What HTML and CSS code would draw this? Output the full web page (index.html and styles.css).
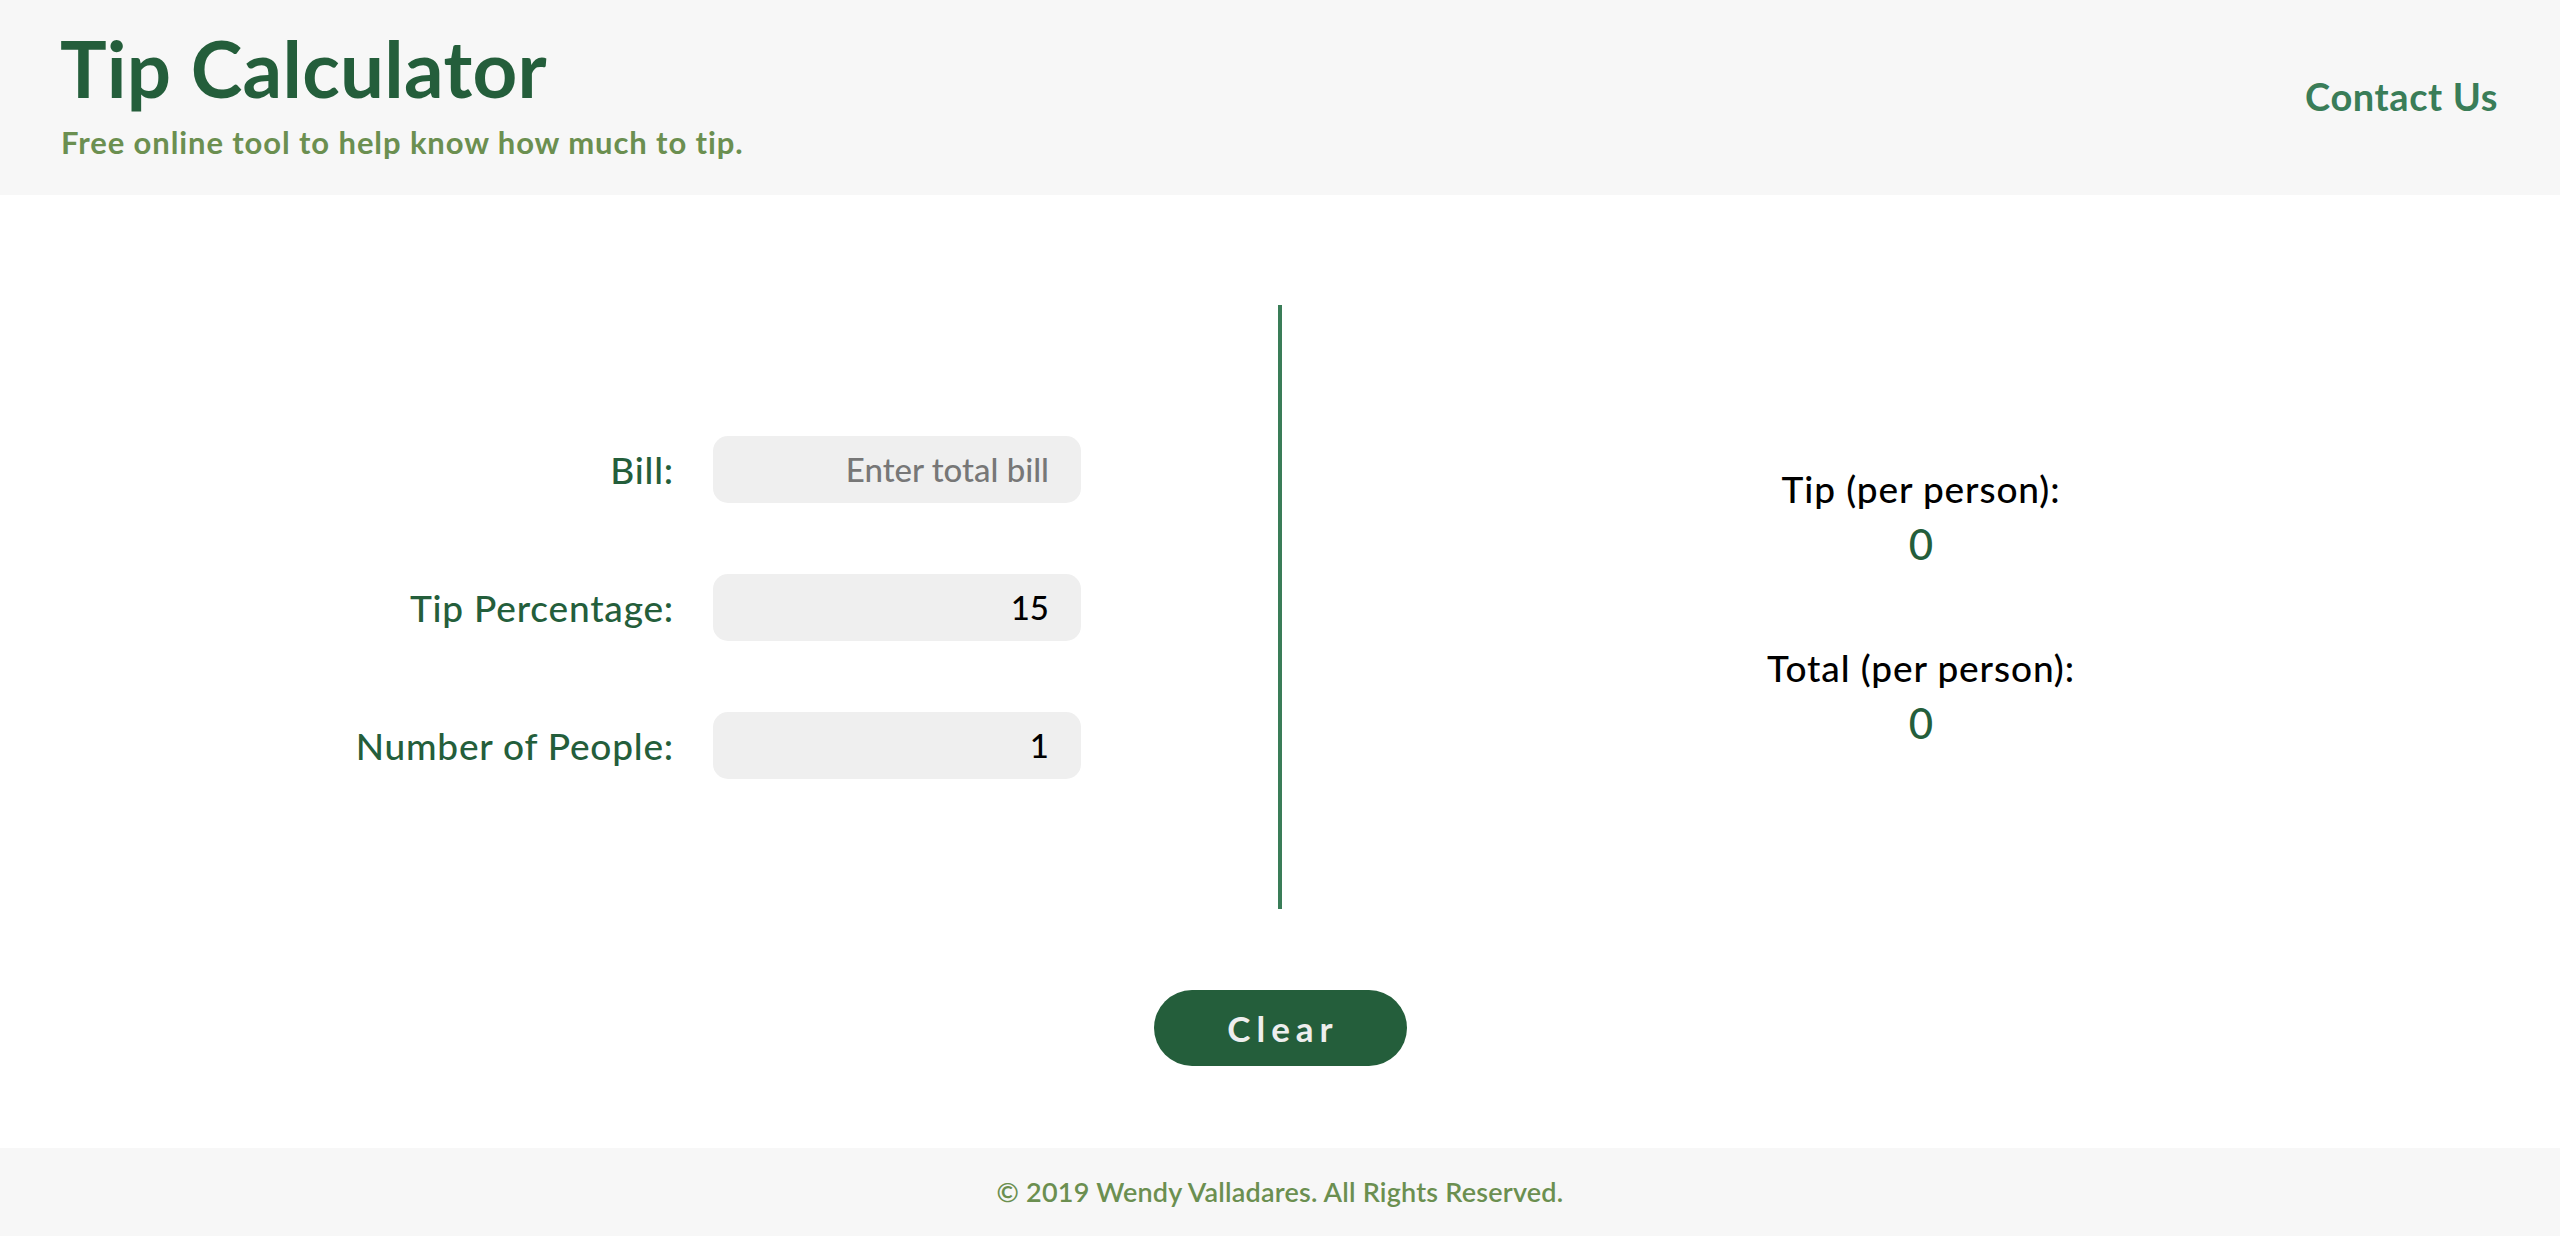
FILE: index.html
```html
<!DOCTYPE html>
<html lang="en">
<head>
<meta charset="utf-8">
<title>Tip Calculator</title>
<link rel="stylesheet" href="styles.css">
</head>
<body>
<header class="site-header">
  <div class="brand">
    <h1 class="title">Tip Calculator</h1>
    <p class="subtitle">Free online tool to help know how much to tip.</p>
  </div>
  <a class="contact" href="#">Contact Us</a>
</header>
<main class="main">
  <div class="calc">
    <section class="inputs">
      <div class="form-grid">
        <label class="field-label" for="bill">Bill:</label>
        <input class="field" id="bill" type="text" placeholder="Enter total bill">
        <label class="field-label" for="tip">Tip Percentage:</label>
        <input class="field" id="tip" type="text" value="15">
        <label class="field-label" for="people">Number of People:</label>
        <input class="field" id="people" type="text" value="1">
      </div>
    </section>
    <div class="divider"></div>
    <section class="results">
      <div class="result">
        <div class="result-label">Tip (per person):</div>
        <div class="result-value">0</div>
      </div>
      <div class="result">
        <div class="result-label">Total (per person):</div>
        <div class="result-value">0</div>
      </div>
    </section>
  </div>
  <button class="clear" type="button">Clear</button>
</main>
<footer class="site-footer">
  <p class="copyright">© 2019 Wendy Valladares. All Rights Reserved.</p>
</footer>
</body>
</html>
```
FILE: styles.css
```css
* { box-sizing: border-box; }

body {
  margin: 0;
  font-family: Lato, "Noto Sans", "Liberation Sans", sans-serif;
  background: #ffffff;
  color: #000;
}

.site-header {
  background: #f7f7f7;
  display: flex;
  justify-content: space-between;
  align-items: center;
  padding: 28px 62px 35px 60px;
}

.title {
  margin: 0;
  font-size: 78px;
  line-height: 80px;
  font-weight: 700;
  letter-spacing: 0.3px;
  color: #245e3b;
}

.subtitle {
  margin: 16px 0 0 1px;
  font-size: 31px;
  line-height: 36px;
  font-weight: 700;
  letter-spacing: 0.9px;
  color: #6b8f50;
}

.contact {
  font-size: 38px;
  line-height: 46px;
  font-weight: 700;
  letter-spacing: 0.6px;
  color: #3a7d58;
  text-decoration: none;
  margin-top: 3px;
}

.main {
  display: flex;
  flex-direction: column;
  align-items: center;
  padding: 110px 0 82px 0;
}

.calc {
  display: flex;
  width: 100%;
  height: 604px;
}

.inputs {
  flex: 1;
  display: flex;
  align-items: center;
  justify-content: center;
}

.form-grid {
  display: grid;
  grid-template-columns: 477px 368px;
  column-gap: 39px;
  row-gap: 71px;
  align-items: center;
}

.field-label {
  text-align: right;
  font-size: 37px;
  font-weight: 500;
  letter-spacing: 0.8px;
  color: #245e3b;
}

.field {
  width: 368px;
  height: 67px;
  border: none;
  border-radius: 15px;
  background: #efefef;
  padding: 0 32px;
  text-align: right;
  font-family: Lato, "Noto Sans", "Liberation Sans", sans-serif;
  font-size: 33px;
  font-weight: 500;
  color: #000;
  outline: none;
}

.field::placeholder {
  color: #777777;
}

.divider {
  width: 4px;
  background: #3a7d58;
}

.results {
  flex: 1;
  display: flex;
  flex-direction: column;
  align-items: center;
  justify-content: center;
  gap: 77px;
}

.result {
  display: flex;
  flex-direction: column;
  align-items: center;
  gap: 8px;
}

.result-label {
  font-size: 37px;
  line-height: 44px;
  font-weight: 500;
  letter-spacing: 0.9px;
  color: #000;
}

.result-value {
  font-size: 42px;
  line-height: 50px;
  font-weight: 500;
  color: #245e3b;
}

.clear {
  margin-top: 81px;
  width: 253px;
  height: 76px;
  border: none;
  border-radius: 38px;
  background: #245e3b;
  color: #eeeeee;
  font-family: Lato, "Noto Sans", "Liberation Sans", sans-serif;
  font-size: 35px;
  font-weight: 700;
  letter-spacing: 6px;
  padding: 0 0 0 6px;
}

.site-footer {
  background: #f7f7f7;
  height: 88px;
  display: flex;
  align-items: center;
  justify-content: center;
}

.copyright {
  margin: 0;
  font-size: 27px;
  line-height: 32px;
  font-weight: 600;
  letter-spacing: 0.2px;
  color: #6b8f50;
}
```
